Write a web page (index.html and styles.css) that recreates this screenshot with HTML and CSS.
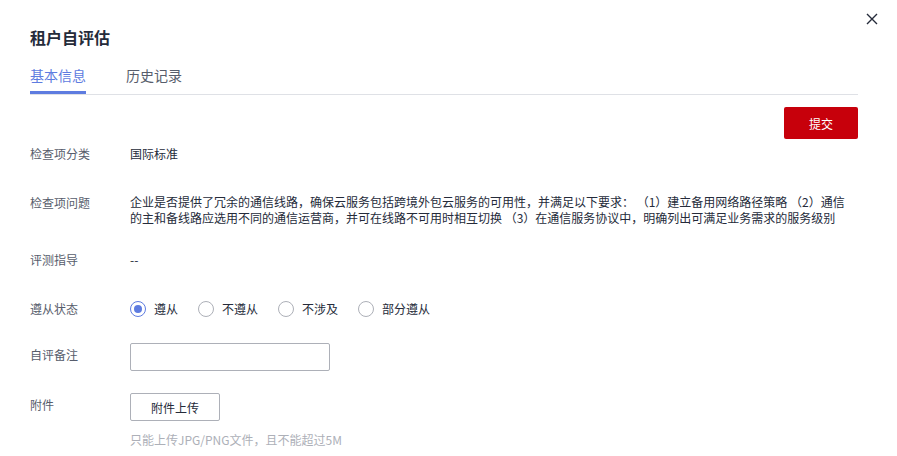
FILE: index.html
```html
<!DOCTYPE html>
<html lang="zh-CN">
<head>
    <meta charset="UTF-8">
    <meta name="viewport" content="width=device-width, initial-scale=1.0">
    <title>租户自评估</title>
    <link rel="stylesheet" href="styles.css">
</head>
<body>

<div class="dialog">
    <button class="close" type="button" aria-label="关闭">
        <svg width="12" height="12" viewBox="0 0 12 12">
            <path d="M1 1L11 11M11 1L1 11" stroke="#252b3a" stroke-width="1.4" fill="none"/>
        </svg>
    </button>

    <h1 class="title">租户自评估</h1>

    <div class="tabs">
        <span class="tab active">基本信息</span>
        <span class="tab">历史记录</span>
    </div>

    <div class="toolbar">
        <button class="btn-submit" type="button">提交</button>
    </div>

    <div class="form">
        <div class="row first">
            <div class="label">检查项分类</div>
            <div class="value">国际标准</div>
        </div>

        <div class="row wide">
            <div class="label">检查项问题</div>
            <div class="value text">企业是否提供了冗余的通信线路，确保云服务包括跨境外包云服务的可用性，并满足以下要求： （1）建立备用网络路径策略 （2）通信的主和备线路应选用不同的通信运营商，并可在线路不可用时相互切换 （3）在通信服务协议中，明确列出可满足业务需求的服务级别</div>
        </div>

        <div class="row">
            <div class="label">评测指导</div>
            <div class="value">--</div>
        </div>

        <div class="row wide">
            <div class="label">遵从状态</div>
            <div class="value radios">
                <label class="radio checked"><span class="dot"></span>遵从</label>
                <label class="radio"><span class="dot"></span>不遵从</label>
                <label class="radio"><span class="dot"></span>不涉及</label>
                <label class="radio"><span class="dot"></span>部分遵从</label>
            </div>
        </div>

        <div class="row">
            <div class="label boxed">自评备注</div>
            <div class="value"><input class="input" type="text"></div>
        </div>

        <div class="row attach">
            <div class="label boxed">附件</div>
            <div class="value">
                <button class="btn-upload" type="button">附件上传</button>
                <p class="hint">只能上传JPG/PNG文件，且不能超过5M</p>
            </div>
        </div>
    </div>
</div>

</body>
</html>
```

FILE: styles.css
```css
body {
    margin: 0;
    font-family: "Noto Sans CJK SC", "Liberation Sans", sans-serif;
    font-size: 12px;
    color: #252b3a;
    background-color: #fff;
}
.dialog {
    position: relative;
    padding: 25px 39px 0 30px;
}
.close {
    position: absolute;
    top: 13px;
    right: 19px;
    width: 12px;
    height: 12px;
    padding: 0;
    border: none;
    background: none;
    line-height: 0;
    cursor: pointer;
}
.title {
    margin: 0;
    font-size: 16px;
    line-height: 24px;
    font-weight: bold;
}
.tabs {
    display: flex;
    gap: 40px;
    margin-top: 16px;
    border-bottom: 1px solid #dfe1e6;
}
.tab {
    font-size: 14px;
    line-height: 20px;
    padding-bottom: 6px;
    border-bottom: 3px solid transparent;
    color: #575d6c;
}
.tab.active {
    color: #5e7ce0;
    border-bottom-color: #5e7ce0;
}
.toolbar {
    display: flex;
    justify-content: flex-end;
    margin-top: 12px;
}
.btn-submit {
    width: 74px;
    height: 32px;
    border: none;
    border-radius: 2px;
    background-color: #c7000b;
    color: #fff;
    font-family: inherit;
    font-size: 12px;
    cursor: pointer;
}
.row {
    display: grid;
    grid-template-columns: 100px 1fr;
    margin-top: 25px;
}
.row.first {
    margin-top: 6px;
}
.row.wide {
    margin-top: 31px;
}
.row.attach {
    margin-top: 22px;
}
.label {
    color: #575d6c;
    line-height: 18px;
}
.label.boxed {
    padding-top: 3px;
}
.value {
    line-height: 18px;
}
.value.text {
    max-width: 720px;
    line-height: 16px;
}
.radios {
    display: flex;
    gap: 20px;
}
.radio {
    display: flex;
    align-items: center;
    gap: 8px;
}
.dot {
    box-sizing: border-box;
    width: 16px;
    height: 16px;
    border: 1px solid #adb0b8;
    border-radius: 50%;
    display: flex;
    align-items: center;
    justify-content: center;
}
.radio.checked .dot {
    border-color: #5e7ce0;
}
.radio.checked .dot::after {
    content: "";
    width: 8px;
    height: 8px;
    border-radius: 50%;
    background-color: #5e7ce0;
}
.input {
    box-sizing: border-box;
    display: block;
    width: 200px;
    height: 28px;
    border: 1px solid #adb0b8;
    border-radius: 2px;
    outline: none;
}
.btn-upload {
    display: block;
    width: 90px;
    height: 28px;
    border: 1px solid #adb0b8;
    border-radius: 2px;
    background-color: #fff;
    color: #252b3a;
    font-family: inherit;
    font-size: 12px;
    cursor: pointer;
}
.hint {
    margin: 10px 0 0;
    color: #adb0b8;
    line-height: 18px;
}
```
